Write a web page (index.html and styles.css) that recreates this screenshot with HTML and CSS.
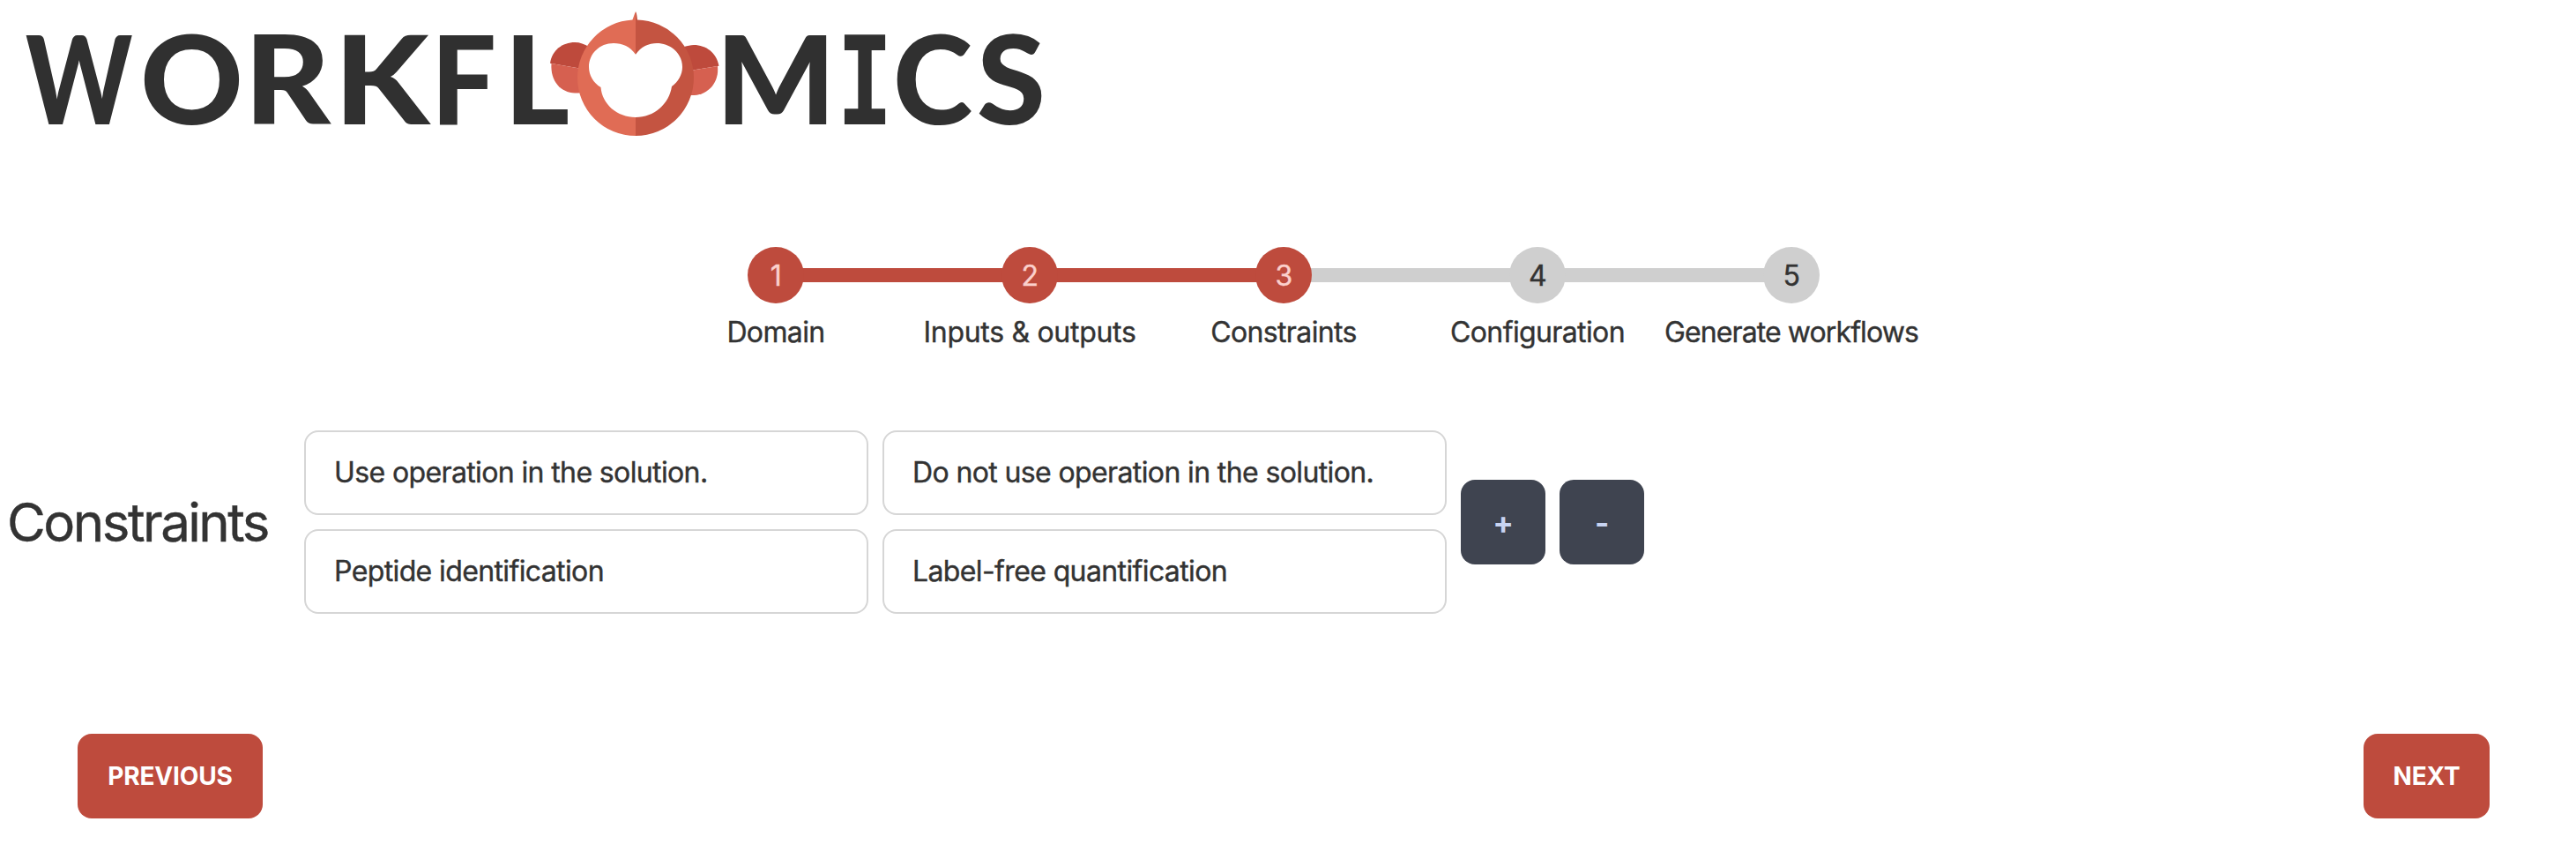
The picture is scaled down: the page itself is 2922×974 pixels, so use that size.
FILE: index.html
```html
<!DOCTYPE html>
<html lang="en">
<head>
<meta charset="utf-8">
<title>Workflomics</title>
<link rel="stylesheet" href="styles.css">
</head>
<body>
<header class="header">
  <svg class="logo" viewBox="0 0 1200 180">
    <g class="logo-text">
      <text transform="translate(29 141) scale(.82 1)">W</text>
      <text x="159" y="141" textLength="117" lengthAdjust="spacingAndGlyphs">O</text>
      <text x="277" y="141" textLength="98" lengthAdjust="spacingAndGlyphs">R</text>
      <text x="379" y="141" textLength="108" lengthAdjust="spacingAndGlyphs">K</text>
      <text x="489" y="141" textLength="74" lengthAdjust="spacingAndGlyphs">F</text>
      <text x="572" y="141" textLength="74" lengthAdjust="spacingAndGlyphs">L</text>
      <text x="812" y="141" textLength="136" lengthAdjust="spacingAndGlyphs">M</text>
      <text class="slab" transform="translate(949 141) scale(.765 1)">I</text>
      <text x="1013" y="141" textLength="90" lengthAdjust="spacingAndGlyphs">C</text>
      <text x="1108" y="141" textLength="78" lengthAdjust="spacingAndGlyphs">S</text>
    </g>
    <path fill="#be4a3c" d="M624 71.700C626 57 638 48 652 48C658 48 663 50 668 53L660 78Z"/>
    <path fill="#d66050" d="M625.500 72L660 78V105C657 105.500 655 105.500 652 105.500C636 105 624 92 625.500 72Z"/>
    <path fill="#be4a3c" d="M815.500 74.700C813 60 801 51 787 51C783 51 780 52 776 53L780 80.500Z"/>
    <path fill="#d66050" d="M814 75L780 80.500V107.500C783 108 785 108 787.500 108C804 107 816 93 814 75Z"/>
    <path fill="#e06c55" d="M721 13C719.500 16 718.500 20 717.400 22.500A66 66 0 0 0 655 88A66 66 0 0 0 721 154Z"/>
    <path fill="#c45441" d="M721 13C722.300 15 722.600 19 723 22.500A66 66 0 0 1 787 88A66 66 0 0 1 721 154Z"/>
    <path fill="#fff" d="M721 61.700C715 53 706 49 696 49C680 49 668 61 668 76C668 85 673 94 681.500 99C683 118 700 133 721 133C742 133 759 118 762 98C769 93 774 85 774 76C774 61 761 49 745 49C736 49 727 53 721 61.700Z"/>
  </svg>
</header>
<main>
  <ul class="steps">
    <li class="step done"><span class="dot">1</span><span class="label">Domain</span></li>
    <li class="step done"><span class="dot">2</span><span class="label">Inputs &amp; outputs</span></li>
    <li class="step done"><span class="dot">3</span><span class="label">Constraints</span></li>
    <li class="step"><span class="dot">4</span><span class="label">Configuration</span></li>
    <li class="step"><span class="dot">5</span><span class="label">Generate workflows</span></li>
  </ul>
  <section class="constraints">
    <h1 class="title">Constraints</h1>
    <div class="fields">
      <div class="field">Use operation in the solution.</div>
      <div class="field">Do not use operation in the solution.</div>
      <div class="field">Peptide identification</div>
      <div class="field">Label-free quantification</div>
    </div>
    <button class="btn square">+</button>
    <button class="btn square">-</button>
  </section>
  <nav class="actions">
    <button class="btn primary previous">PREVIOUS</button>
    <button class="btn primary next">NEXT</button>
  </nav>
</main>
</body>
</html>
```
FILE: styles.css
```css
* { box-sizing: border-box; }
body {
  margin: 0;
  background: #fff;
  color: #333;
  font: 400 32px/48px Inter, "Liberation Sans", sans-serif;
  letter-spacing: -0.62px;
}
.header { height: 272px; }
.logo { display: block; width: 1200px; height: 180px; }
.logo-text {
  font-family: Lato, sans-serif;
  font-weight: 900;
  font-size: 140px;
  letter-spacing: 0;
  fill: #303030;
}
.logo-text .slab {
  font-family: "DejaVu Sans Mono", monospace;
  font-weight: 700;
  font-size: 139px;
}
.steps {
  display: grid;
  grid-template-columns: repeat(5, 288px);
  width: 1440px;
  height: 216px;
  margin: 0 0 0 736px;
  padding: 0;
  list-style: none;
}
.step {
  position: relative;
  display: flex;
  flex-direction: column;
  align-items: center;
  padding-top: 8px;
}
.step + .step::before {
  content: "";
  position: absolute;
  top: 32px;
  left: -144px;
  width: 288px;
  height: 16px;
  background: #cfcfcf;
}
.step.done + .done::before { background: #be4b3d; }
.dot {
  z-index: 1;
  width: 64px;
  height: 64px;
  border-radius: 50%;
  background: #cfcfcf;
  line-height: 65px;
  text-align: center;
}
.done .dot { background: #be4b3d; color: #fbd0cc; }
.label { margin-top: 9px; white-space: nowrap; }
.label, .field, .title, .dot { -webkit-text-stroke: 0.4px; }
.step:nth-child(2) .label { letter-spacing: -0.3px; }
.step:nth-child(5) .label { letter-spacing: -0.9px; }
.constraints {
  display: flex;
  align-items: center;
  gap: 16px;
  height: 208px;
  padding-left: 8px;
}
.title {
  width: 321px;
  margin: 0;
  font-size: 60px;
  line-height: 72px;
  font-weight: 400;
  letter-spacing: -2.5px;
}
.fields {
  display: grid;
  grid-template-columns: 640px 640px;
  gap: 16px;
}
.field {
  height: 96px;
  padding: 22px 32px;
  border: 2px solid #d6d6d6;
  border-radius: 16px;
}
.btn {
  height: 96px;
  padding: 0;
  border: 0;
  border-radius: 16px;
  font: 700 28px/96px Inter, "Liberation Sans", sans-serif;
  letter-spacing: -0.15px;
}
.square {
  width: 96px;
  background: #3f4450;
  color: #c8d4f2;
  font-size: 35px;
}
.actions {
  display: flex;
  justify-content: space-between;
  padding: 136px 98px 46px 88px;
}
.primary { background: #be4b3d; color: #fff; }
.previous { width: 210px; }
.next { width: 143px; }
```
